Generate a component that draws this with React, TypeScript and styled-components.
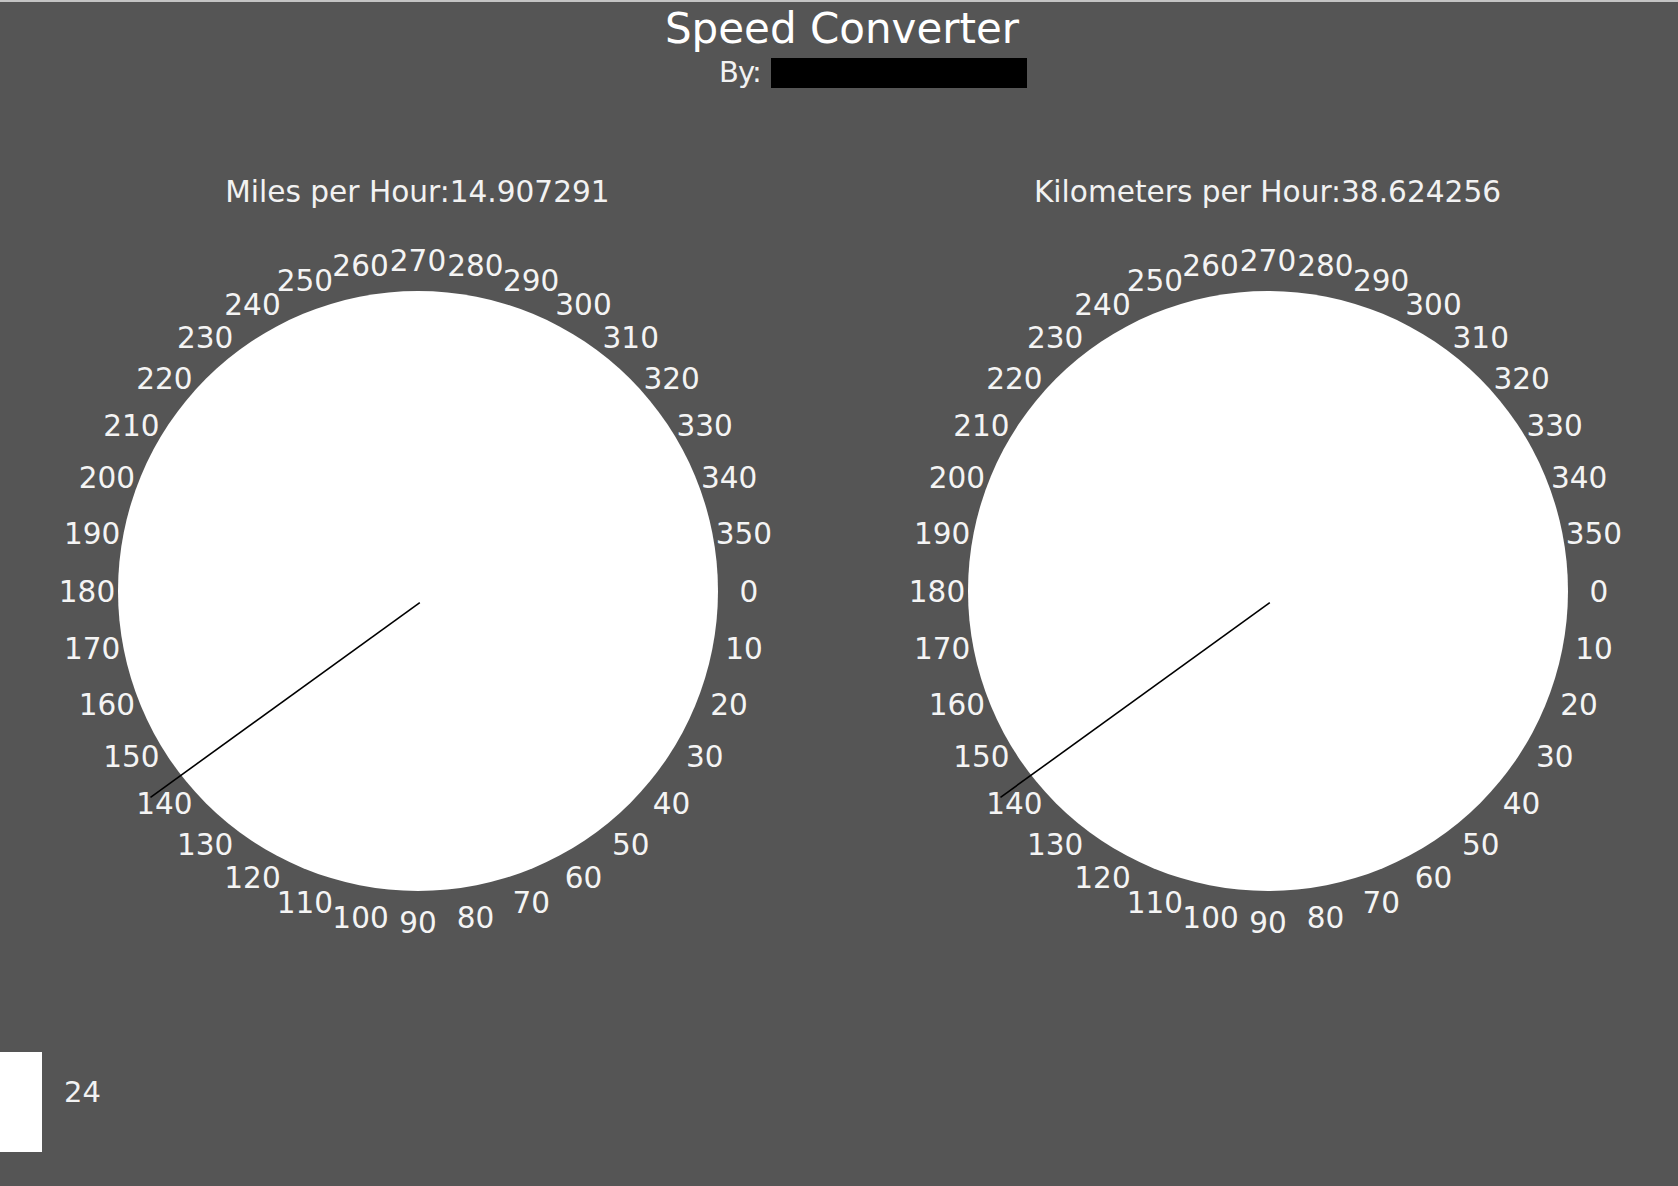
import React from "react";
import styled, { createGlobalStyle } from "styled-components";

const GlobalStyle = createGlobalStyle`
  html, body {
    margin: 0;
    padding: 0;
    background: #555555;
  }
  body {
    font-family: "DejaVu Sans", "Liberation Sans", sans-serif;
  }
`;

const Page = styled.div`
  box-sizing: border-box;
  width: 1678px;
  height: 1186px;
  background: #555555;
  border-top: 2px solid #c4c4c4;
  display: flex;
  flex-direction: column;
  overflow: hidden;
  color: #ffffff;
  font-family: "DejaVu Sans", "Liberation Sans", sans-serif;
`;

const Title = styled.h1`
  margin: 3px 0 0 0;
  font-size: 42px;
  line-height: 48px;
  font-weight: normal;
  text-align: center;
  padding-left: 6px;
  color: #ffffff;
`;

const ByRow = styled.div`
  display: flex;
  align-items: flex-start;
  gap: 10px;
  margin-top: 5px;
  padding-left: 719px;
`;

const ByLabel = styled.span`
  font-size: 29px;
  line-height: 28px;
  color: #f2f2f2;
  letter-spacing: -1px;
`;

const Redacted = styled.div`
  width: 256px;
  height: 30px;
  background: #000000;
`;

const GaugeRow = styled.div`
  display: flex;
  gap: 150px;
  margin-top: 87px;
  padding-left: 67.5px;
`;

const GaugeColumn = styled.section`
  width: 700px;
  display: flex;
  flex-direction: column;
  align-items: center;
`;

const GaugeHeading = styled.div`
  font-size: 29.6px;
  line-height: 34px;
  color: #f2f2f2;
  white-space: nowrap;
`;

const DialSvg = styled.svg`
  display: block;
  width: 700px;
  height: 750px;
  overflow: visible;
`;

const Footer = styled.div`
  display: flex;
  align-items: flex-start;
  margin-top: 93px;
`;

const ValueBox = styled.div`
  width: 42px;
  height: 100px;
  background: #ffffff;
`;

const ValueText = styled.span`
  margin-left: 22px;
  margin-top: 23px;
  font-size: 29px;
  line-height: 34px;
  color: #f2f2f2;
`;

const CX = 350;
const CY = 382;
const R = 300;
const LR = 331;

const Dial: React.FC = () => {
  const labels = Array.from({ length: 36 }, (_, i) => i * 10);
  return (
    <DialSvg viewBox="0 0 700 750">
      <circle cx={CX} cy={CY} r={R} fill="#ffffff" />
      {labels.map((deg) => {
        const a = (deg * Math.PI) / 180;
        const x = CX + LR * Math.cos(a);
        const y = CY + LR * Math.sin(a) + 10.7;
        return (
          <text
            key={deg}
            x={x}
            y={y}
            textAnchor="middle"
            fill="#f4f4f4"
            fontSize="29.5"
            fontFamily="'DejaVu Sans', 'Liberation Sans', sans-serif"
          >
            {deg}
          </text>
        );
      })}
      <line x1={351.8} y1={393.7} x2={82.5} y2={588.3} stroke="#000000" strokeWidth={1.6} />
    </DialSvg>
  );
};

const Gauge: React.FC<{ title: string }> = ({ title }) => (
  <GaugeColumn>
    <GaugeHeading>{title}</GaugeHeading>
    <Dial />
  </GaugeColumn>
);

export default function App() {
  return (
    <>
      <GlobalStyle />
      <Page>
        <Title>Speed Converter</Title>
        <ByRow>
          <ByLabel>By:</ByLabel>
          <Redacted />
        </ByRow>
        <GaugeRow>
          <Gauge title="Miles per Hour:14.907291" />
          <Gauge title="Kilometers per Hour:38.624256" />
        </GaugeRow>
        <Footer>
          <ValueBox />
          <ValueText>24</ValueText>
        </Footer>
      </Page>
    </>
  );
}
